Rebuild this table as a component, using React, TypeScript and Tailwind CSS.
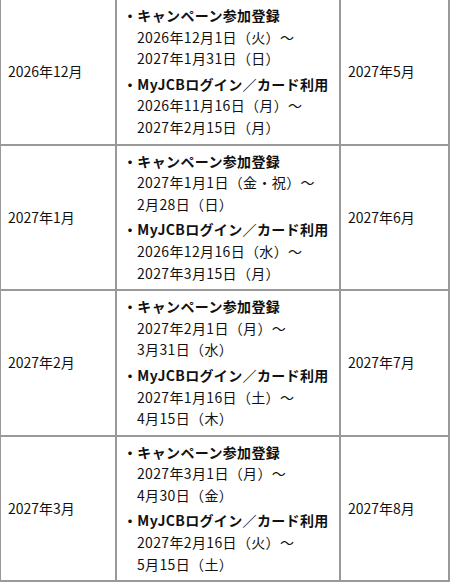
type Item = { title: string; lines: string[] };

interface Row {
  month: string;
  items: Item[];
  grant: string;
}

const rows: Row[] = [
  {
    month: "2026年12月",
    items: [
      { title: "キャンペーン参加登録", lines: ["2026年12月1日（火）〜", "2027年1月31日（日）"] },
      { title: "MyJCBログイン／カード利用", lines: ["2026年11月16日（月）〜", "2027年2月15日（月）"] },
    ],
    grant: "2027年5月",
  },
  {
    month: "2027年1月",
    items: [
      { title: "キャンペーン参加登録", lines: ["2027年1月1日（金・祝）〜", "2月28日（日）"] },
      { title: "MyJCBログイン／カード利用", lines: ["2026年12月16日（水）〜", "2027年3月15日（月）"] },
    ],
    grant: "2027年6月",
  },
  {
    month: "2027年2月",
    items: [
      { title: "キャンペーン参加登録", lines: ["2027年2月1日（月）〜", "3月31日（水）"] },
      { title: "MyJCBログイン／カード利用", lines: ["2027年1月16日（土）〜", "4月15日（木）"] },
    ],
    grant: "2027年7月",
  },
  {
    month: "2027年3月",
    items: [
      { title: "キャンペーン参加登録", lines: ["2027年3月1日（月）〜", "4月30日（金）"] },
      { title: "MyJCBログイン／カード利用", lines: ["2027年2月16日（火）〜", "5月15日（土）"] },
    ],
    grant: "2027年8月",
  },
];

const cell = "border-r-2 border-b-2 border-[#999] align-middle";

export default function App() {
  return (
    <div className="w-[450px] overflow-hidden bg-white">
      <table
        className="-ml-px w-[451px] table-fixed border-separate border-spacing-0 text-[14px] leading-[21.6px] text-[#111]"
        style={{ fontFamily: '"Noto Sans CJK JP", "Noto Sans", sans-serif' }}
      >
        <colgroup>
          <col className="w-[118px]" />
          <col className="w-[224px]" />
          <col className="w-[109px]" />
        </colgroup>
        <tbody>
          {rows.map((r) => (
            <tr key={r.month}>
              <td className={`${cell} border-l-2 px-[7px]`}>{r.month}</td>
              <td className={`${cell} pl-[6px] pr-[4px] pt-[5px] pb-[5px] tracking-[0.35px]`}>
                <ul className="flex flex-col gap-[4px]">
                  {r.items.map((it) => (
                    <li key={it.title}>
                      <p className="font-bold">・{it.title}</p>
                      <div className="pl-[14px]">
                        {it.lines.map((l) => (
                          <p key={l} className="whitespace-nowrap">
                            {l}
                          </p>
                        ))}
                      </div>
                    </li>
                  ))}
                </ul>
              </td>
              <td className={`${cell} px-[7px]`}>{r.grant}</td>
            </tr>
          ))}
        </tbody>
      </table>
    </div>
  );
}
